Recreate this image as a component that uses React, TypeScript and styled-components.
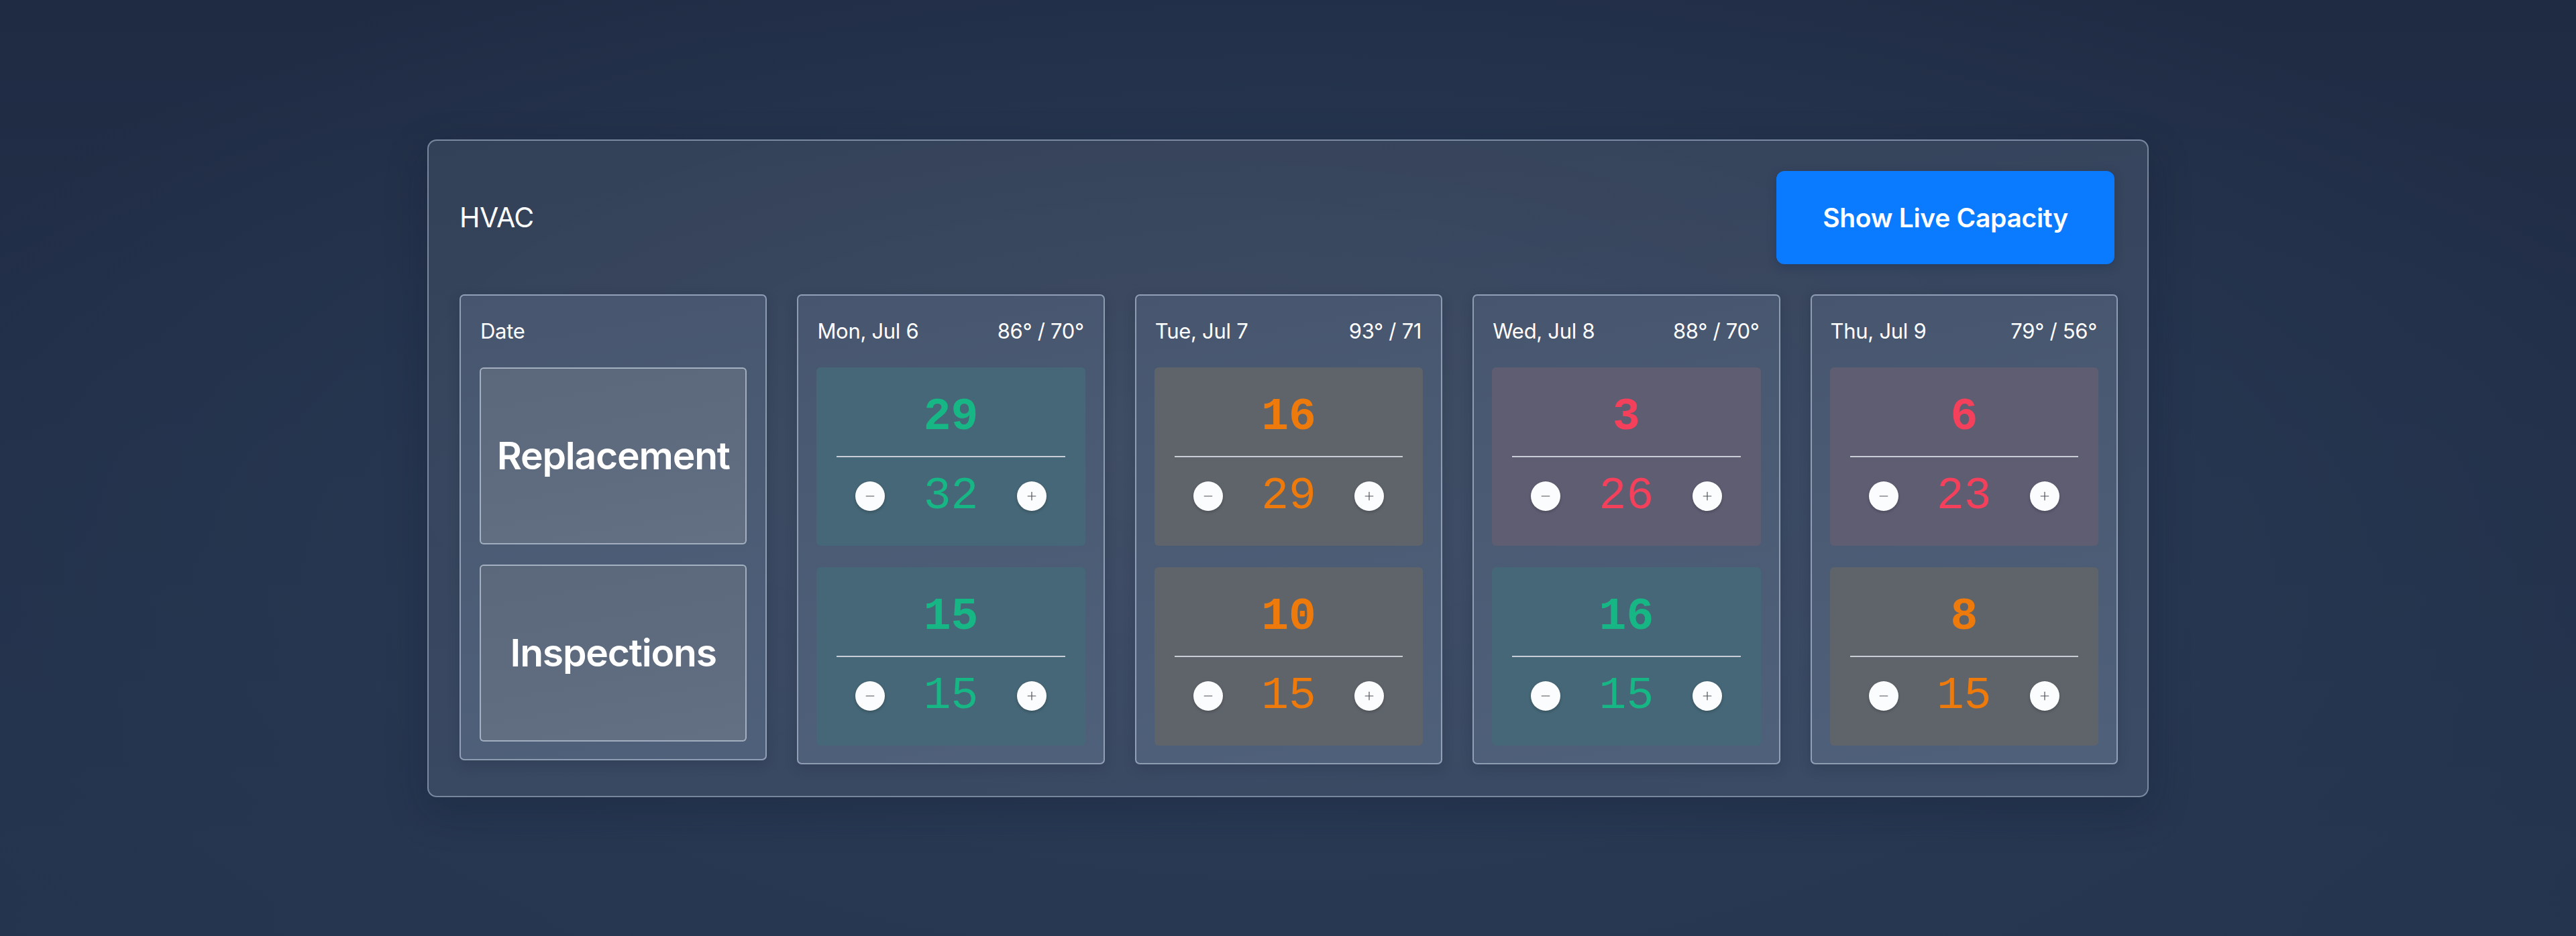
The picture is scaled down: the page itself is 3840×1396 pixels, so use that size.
import React from 'react'
import styled, { createGlobalStyle } from 'styled-components'
import { Minus, Plus } from 'lucide-react'

type Tone = 'green' | 'orange' | 'red'

interface Slot {
	booked: number;
	capacity: number;
	tone: Tone;
}

interface Day {
	label: string;
	temp: string;
	slots: Slot[];
}

const days: Day[] = [
	{
		label: 'Mon, Jul 6',
		temp: '86° / 70°',
		slots: [
			{ booked: 29, capacity: 32, tone: 'green' },
			{ booked: 15, capacity: 15, tone: 'green' },
		],
	},
	{
		label: 'Tue, Jul 7',
		temp: '93° / 71',
		slots: [
			{ booked: 16, capacity: 29, tone: 'orange' },
			{ booked: 10, capacity: 15, tone: 'orange' },
		],
	},
	{
		label: 'Wed, Jul 8',
		temp: '88° / 70°',
		slots: [
			{ booked: 3, capacity: 26, tone: 'red' },
			{ booked: 16, capacity: 15, tone: 'green' },
		],
	},
	{
		label: 'Thu, Jul 9',
		temp: '79° / 56°',
		slots: [
			{ booked: 6, capacity: 23, tone: 'red' },
			{ booked: 8, capacity: 15, tone: 'orange' },
		],
	},
]

const tones: Record<Tone, { bg: string; fg: string }> = {
	green: { bg: '#466777', fg: '#16b784' },
	orange: { bg: '#5f646b', fg: '#ee7a0b' },
	red: { bg: '#5f5d72', fg: '#f4405b' },
}

const GlobalStyle = createGlobalStyle`
	html, body {
		margin: 0;
		padding: 0;
	}

	body {
		font-family: Inter, "Noto Sans", "Liberation Sans", sans-serif;
		color: #fff;
		background: #1f2c44;
	}

	* {
		box-sizing: border-box;
	}
`

export default function App() {
	return (
		<>
			<GlobalStyle />
			<Page>
				<Panel>
					<Header>
						<Title>HVAC</Title>
						<LiveButton>Show Live Capacity</LiveButton>
					</Header>
					<Columns>
						<Card $date>
							<CardHead>
								<span>Date</span>
							</CardHead>
							<Labels>
								<LabelBox>Replacement</LabelBox>
								<LabelBox>Inspections</LabelBox>
							</Labels>
						</Card>
						{days.map((day) => (
							<Card key={day.label}>
								<CardHead>
									<span>{day.label}</span>
									<span>{day.temp}</span>
								</CardHead>
								<Slots>
									{day.slots.map((slot, i) => (
										<SlotBox key={i} $tone={slot.tone}>
											<Booked>{slot.booked}</Booked>
											<Divider />
											<Stepper>
												<RoundButton aria-label='decrease'>
													<Minus size={20} strokeWidth={1.4} />
												</RoundButton>
												<Capacity>{slot.capacity}</Capacity>
												<RoundButton aria-label='increase'>
													<Plus size={20} strokeWidth={1.4} />
												</RoundButton>
											</Stepper>
										</SlotBox>
									))}
								</Slots>
							</Card>
						))}
					</Columns>
				</Panel>
			</Page>
		</>
	)
}

const Page = styled.div`
	min-height: 100vh;
	display: flex;
	align-items: center;
	justify-content: center;

	background:
		radial-gradient(ellipse 60% 75% at 50% 62%, #2d3d58 0%, #283852 45%, rgba(31, 44, 68, 0) 100%),
		linear-gradient(180deg, #1f2b43 0%, #223049 60%, #24344f 100%);
`

const Panel = styled.div`
	width: 2566px;

	padding: 45px 44px 47px 46px;

	border: 2px solid rgba(176, 192, 214, 0.55);
	border-radius: 14px;

	background:
		radial-gradient(ellipse 70% 80% at 45% 45%, rgba(255, 255, 255, 0.04), rgba(255, 255, 255, 0) 70%),
		linear-gradient(170deg, #334158 0%, #38475f 50%, #3b4b65 100%);

	box-shadow: 0 20px 60px rgba(10, 20, 40, 0.25);
`

const Header = styled.div`
	display: flex;
	align-items: center;
	justify-content: space-between;

	height: 139px;
	margin-bottom: 45px;
`

const Title = styled.h1`
	margin: 0;

	font-size: 41px;
	font-weight: 400;
	letter-spacing: -0.5px;
`

const LiveButton = styled.button`
	width: 504px;
	height: 139px;
	margin-right: 5px;

	border: none;
	border-radius: 12px;

	background: #0a7bff;
	color: #fff;

	font-family: inherit;
	font-size: 39px;
	font-weight: 600;
	letter-spacing: -0.3px;

	box-shadow: 0 4px 14px rgba(0, 30, 80, 0.25);
`

const Columns = styled.div`
	display: grid;
	grid-template-columns: repeat(5, 1fr);
	gap: 45px;
	align-items: start;
`

const Card = styled.div<{ $date?: boolean }>`
	display: flex;
	flex-direction: column;

	padding: 26px ${(p) => (p.$date ? '28px' : '27px')} 26px;

	border: 2px solid rgba(190, 204, 224, 0.6);
	border-radius: 7px;

	background: linear-gradient(170deg, #47566e 0%, #4b5b74 45%, #4f607a 100%);

	box-shadow: 0 6px 18px rgba(15, 25, 45, 0.18);
`

const CardHead = styled.div`
	display: flex;
	align-items: center;
	justify-content: space-between;

	height: 54px;
	margin-bottom: 27px;
	padding: 0 2px 0 1px;

	font-size: 31px;
	letter-spacing: -0.3px;
`

const Labels = styled.div`
	display: flex;
	flex-direction: column;
	gap: 30px;
`

const LabelBox = styled.div`
	display: flex;
	align-items: center;
	justify-content: center;

	height: 264px;

	border: 2px solid rgba(200, 212, 228, 0.65);
	border-radius: 6px;

	background: linear-gradient(170deg, #5b687b 0%, #5f6c7f 60%, #637083 100%);

	font-size: 57px;
	font-weight: 600;
	letter-spacing: -1.2px;
`

const Slots = styled.div`
	display: flex;
	flex-direction: column;
	gap: 32px;
`

const SlotBox = styled.div<{ $tone: Tone }>`
	display: grid;
	grid-template-rows: 1fr 116px 2px 116px 1fr;

	height: 266px;
	padding: 0 30px;

	border-radius: 6px;

	background: ${(p) => tones[p.$tone].bg};
	color: ${(p) => tones[p.$tone].fg};
`

const Booked = styled.div`
	grid-row: 2;

	display: flex;
	align-items: center;
	justify-content: center;

	font-family: "Liberation Mono", "DejaVu Sans Mono", monospace;
	font-size: 68px;
	font-weight: 700;
`

const Divider = styled.div`
	grid-row: 3;

	background: #c9ced6;
`

const Stepper = styled.div`
	grid-row: 4;

	display: flex;
	align-items: center;
	justify-content: space-between;

	padding: 0 28px;
`

const Capacity = styled.div`
	font-family: "Liberation Mono", "DejaVu Sans Mono", monospace;
	font-size: 68px;
	font-weight: 400;
`

const RoundButton = styled.button`
	display: flex;
	align-items: center;
	justify-content: center;

	width: 44px;
	height: 44px;
	padding: 0;

	border: none;
	border-radius: 50%;

	background: #fbfcfd;
	color: #4a4f57;

	box-shadow: 0 2px 4px rgba(0, 0, 0, 0.22);
`
